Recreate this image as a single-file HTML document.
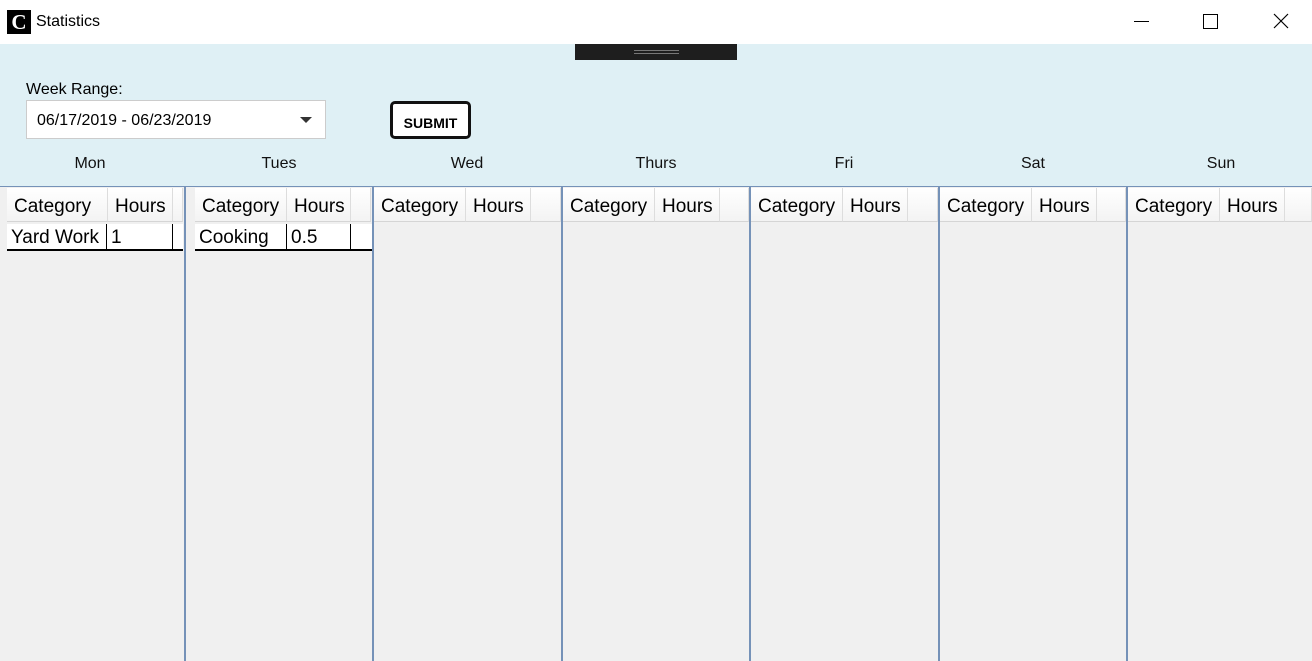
<!DOCTYPE html><html><head><style>
body{margin:0;width:1312px;height:661px;position:relative;overflow:hidden;font-family:"Liberation Sans",sans-serif;background:#f0f0f0;color:#000}
.a{position:absolute}
.tb{left:0;top:0;width:1312px;height:44px;background:#fff}
.top{left:0;top:44px;width:1312px;height:142px;background:#dff0f5}
.day{top:155px;font-size:16px;width:120px;text-align:center;color:#111}
.vl{top:186px;width:2px;height:475px;background:#7592b8}
.hl{left:0;top:186px;width:1312px;height:1px;background:#7592b8}
.hc{top:188px;height:34px;background:linear-gradient(#fff,#f3f3f3);border-right:1px solid #ddd;border-bottom:1px solid #d5d5d5;font-size:19px;line-height:38px;padding-left:7px;box-sizing:border-box;white-space:nowrap;overflow:hidden}
.cell{top:224px;height:27px;font-size:19px;line-height:28px;background:#fff;border-right:1px solid #000;border-bottom:2px solid #000;padding-left:4px;box-sizing:border-box;white-space:nowrap;overflow:hidden}
</style></head><body>
<div class="a tb"></div>
<div class="a" style="left:7px;top:10px;width:24px;height:24px;background:#000;color:#fff;font:bold 21px/24px 'Liberation Serif',serif;text-align:center">C</div>
<div class="a" style="left:36px;top:13px;font-size:16px">Statistics</div>
<div class="a" style="left:1134px;top:21px;width:15px;height:1px;background:#000"></div>
<div class="a" style="left:1203px;top:14px;width:13px;height:13px;border:1px solid #000"></div>
<svg class="a" style="left:1273px;top:13px" width="16" height="16"><path d="M1 1L15 15M15 1L1 15" stroke="#000" stroke-width="1.2"/></svg>
<div class="a top"></div>
<div class="a" style="left:575px;top:44px;width:162px;height:16px;background:#1e1e1e"></div>
<div class="a" style="left:634px;top:50px;width:45px;height:1px;background:#777"></div>
<div class="a" style="left:634px;top:53px;width:45px;height:1px;background:#777"></div>
<div class="a" style="left:26px;top:81px;font-size:16px">Week Range:</div>
<div class="a" style="left:26px;top:100px;width:300px;height:39px;background:#fff;border:1px solid #ccc;box-sizing:border-box;font-size:16px;line-height:39px;padding-left:10px">06/17/2019 - 06/23/2019</div>
<div class="a" style="left:300px;top:117px;width:0;height:0;border-left:6px solid transparent;border-right:6px solid transparent;border-top:6px solid #333"></div>
<div class="a" style="left:390px;top:101px;width:81px;height:38px;border:3px solid #111;border-radius:5px;box-sizing:border-box;background:#fff;font-weight:bold;font-size:14px;line-height:38px;text-align:center">SUBMIT</div>
<div class="a day" style="left:30px">Mon</div>
<div class="a day" style="left:219px">Tues</div>
<div class="a day" style="left:407px">Wed</div>
<div class="a day" style="left:596px">Thurs</div>
<div class="a day" style="left:784px">Fri</div>
<div class="a day" style="left:973px">Sat</div>
<div class="a day" style="left:1161px">Sun</div>
<div class="a hl"></div>
<div class="a vl" style="left:184px"></div>
<div class="a vl" style="left:372px"></div>
<div class="a vl" style="left:561px"></div>
<div class="a vl" style="left:749px"></div>
<div class="a vl" style="left:938px"></div>
<div class="a vl" style="left:1126px"></div>
<div class="a hc" style="left:7px;width:101px">Category</div>
<div class="a hc" style="left:108px;width:65px">Hours</div>
<div class="a hc" style="left:173px;width:10px"></div>
<div class="a cell" style="left:7px;width:100px">Yard Work</div>
<div class="a cell" style="left:107px;width:66px">1</div>
<div class="a cell" style="left:173px;width:10px;border-right:none"></div>
<div class="a hc" style="left:195px;width:92px">Category</div>
<div class="a hc" style="left:287px;width:64px">Hours</div>
<div class="a hc" style="left:351px;width:20px"></div>
<div class="a cell" style="left:195px;width:92px">Cooking</div>
<div class="a cell" style="left:287px;width:64px">0.5</div>
<div class="a cell" style="left:351px;width:21px;border-right:none"></div>
<div class="a hc" style="left:374px;width:92px">Category</div><div class="a hc" style="left:466px;width:65px">Hours</div><div class="a hc" style="left:531px;width:30px"></div>
<div class="a hc" style="left:563px;width:92px">Category</div><div class="a hc" style="left:655px;width:65px">Hours</div><div class="a hc" style="left:720px;width:29px"></div>
<div class="a hc" style="left:751px;width:92px">Category</div><div class="a hc" style="left:843px;width:65px">Hours</div><div class="a hc" style="left:908px;width:30px"></div>
<div class="a hc" style="left:940px;width:92px">Category</div><div class="a hc" style="left:1032px;width:65px">Hours</div><div class="a hc" style="left:1097px;width:29px"></div>
<div class="a hc" style="left:1128px;width:92px">Category</div><div class="a hc" style="left:1220px;width:65px">Hours</div><div class="a hc" style="left:1285px;width:27px"></div>
</body></html>
